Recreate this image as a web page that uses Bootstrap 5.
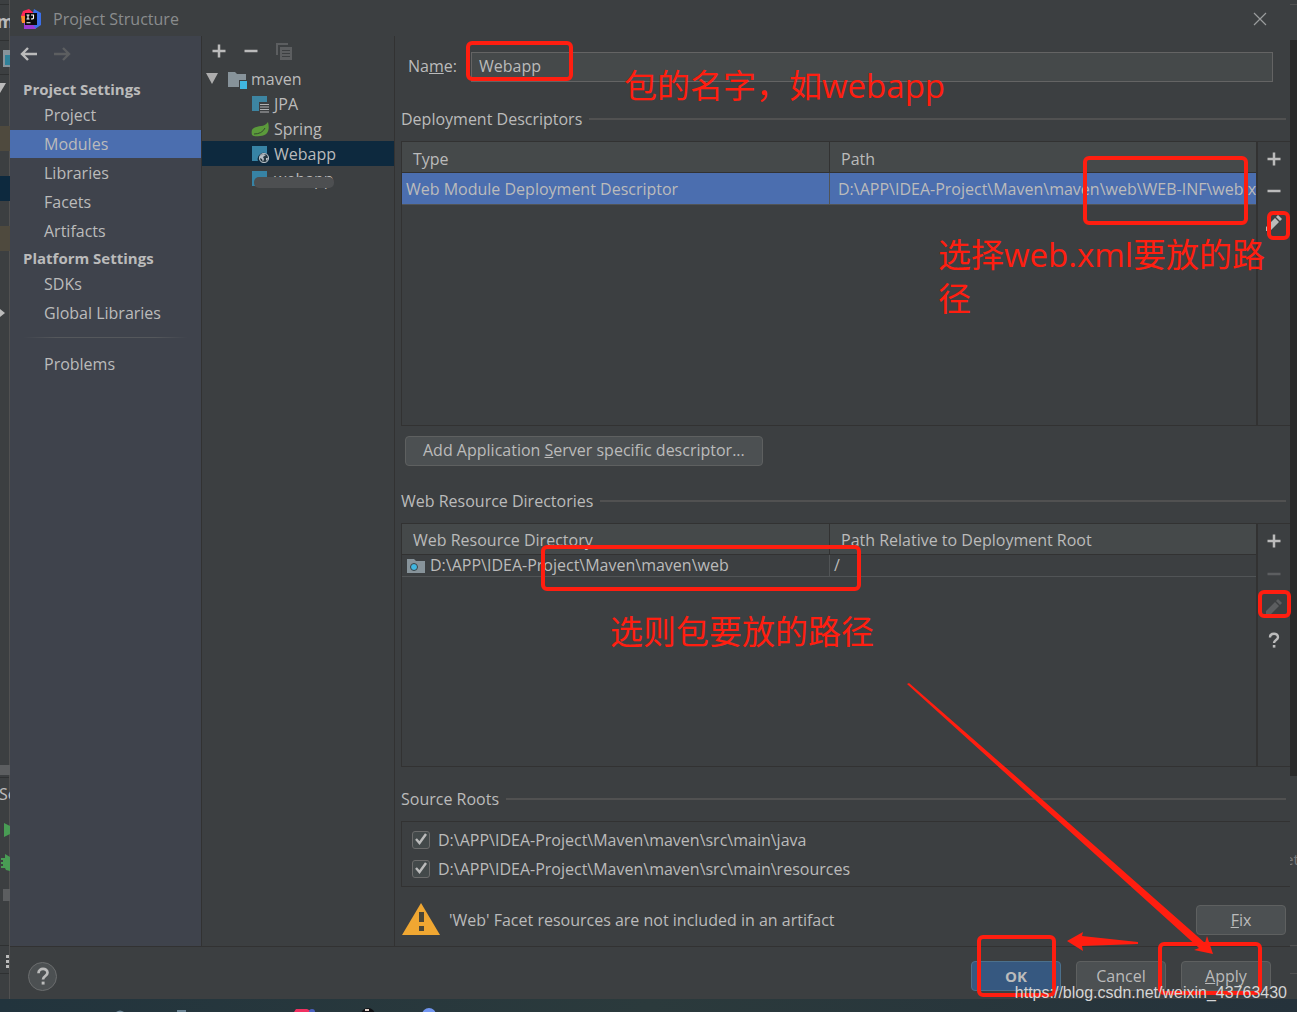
<!DOCTYPE html>
<html lang="en">
<head>
<meta charset="utf-8">
<meta name="viewport" content="width=device-width, initial-scale=1">
<title>Project Structure</title>
<link href="https://cdn.jsdelivr.net/npm/bootstrap@5.3.0/dist/css/bootstrap.min.css" rel="stylesheet">
<style>
  body { font-family: "Open Sans", "Noto Sans", "Noto Sans CJK SC", sans-serif; font-size: 16px; line-height: 24px; color: #bbbbbb; background: #3c3f41; }
  button { font: inherit; color: inherit; }
  .desk { min-height: 100vh; overflow: hidden; }
  .strip { flex: none; width: 10px; overflow: hidden; }
  .strip-end { width: 7px; }
  .dialog-box { min-width: 0; background: #3c3f41; }
  .title-bar { height: 36px; padding: 2px 22px 0 11px; color: #8a8c8d; }
  .plain-btn { display: inline-flex; align-items: center; justify-content: center; padding: 0; border: 0; background: none; }
  .side { flex: none; width: 192px; background: #3f434c; border-right: 1px solid #323232; }
  .side-arrows { height: 41px; padding: 10px 0 0 10px; gap: 17px; align-items: flex-start; }
  .side-title { font-weight: 700; font-size: 15px; line-height: 24px; padding-left: 13px; margin: 0; }
  .side-link { display: block; height: 28px; line-height: 28px; margin-bottom: 1px; padding-left: 34px; color: #bbbbbb; text-decoration: none; }
  .side-link.active { background: #4b6eaf; }
  .side-line { height: 1px; margin: 10px 13px 12px; background: linear-gradient(90deg, transparent, #55585c 20%, #55585c 80%, transparent); }
  .tree { flex: none; width: 193px; border-right: 1px solid #323232; }
  .tree-tools { height: 30px; padding-left: 9px; gap: 16px; }
  .tree-row { height: 25px; padding-left: 49px; gap: 5px; }
  .tree-root { padding-left: 2px; gap: 3px; }
  .tree-root svg:first-child { margin-right: 5px; }
  .tree-row.active { background: #0d293e; }
  .smudge { position: absolute; left: 52px; top: 11px; width: 80px; height: 11px; border-radius: 5px; background: #4d4f51; }
  .pane { min-width: 0; padding: 16px 0 9px 6px; }
  .name-row { padding: 0 17px 0 7px; gap: 14px; }
  .name-row label { padding-bottom: 2px; }
  .name-box { height: 30px; min-width: 0; padding: 0 7px 2px; border: 1px solid #646464; background: #45494a; color: #bbbbbb; }
  .group-head { gap: 7px; margin: 0 4px 10px 0; font-size: 16px; line-height: 24px; font-weight: 400; }
  .group-head::after { content: ""; flex: 1; height: 2px; background: #515151; }
  .head-first { margin-top: 25px; }
  .head-second { margin-top: 23px; }
  .head-third { margin-top: 20px; }
  .grid-wrap { min-height: 150px; border: 1px solid #323232; border-right: 0; }
  .grid-upper { flex: 285 1 0; }
  .grid-lower { flex: 244 1 0; }
  .grid-area { min-width: 0; border-right: 2px solid #323232; }
  .data-grid { width: 100%; table-layout: fixed; border-collapse: separate; border-spacing: 0; }
  .data-grid th { height: 31px; padding: 3px 11px 0; font-weight: 400; background: #45494a; border-bottom: 1px solid #323232; }
  .data-grid th + th { border-left: 1px solid #323232; }
  .data-grid td { padding: 0 4px; white-space: nowrap; overflow: hidden; border-bottom: 1px solid #515456; }
  .data-grid td + td { border-left: 1px solid #515456; }
  .data-grid .chosen td { height: 32px; background: #4b6eaf; }
  .data-grid .chosen td + td { padding-left: 8px; }
  .data-grid .low td { height: 22px; line-height: 21px; }
  .side-tools { flex: none; width: 32px; padding-top: 9px; gap: 16px; }
  .grid-lower .side-tools { gap: 17px; }
  .add-line { margin-top: 10px; padding-left: 4px; line-height: 0; }
  .ide-btn { height: 30px; min-width: 90px; padding: 0 17px; border: 1px solid #5e6060; border-radius: 4px; background: #4c5052; line-height: 27px; }
  .ide-main { background: #365880; border-color: #4c708c; font-weight: 700; font-size: 15px; }
  .roots { padding: 3px 0 3px 10px; border: 1px solid #323232; border-right: 0; }
  .root-row { height: 29px; gap: 8px; }
  .root-row input { appearance: none; width: 18px; height: 18px; margin: 0; border: 1px solid #6b6b6b; border-radius: 3px; background: #43494a; }
  .root-row .tick { position: absolute; left: 2px; top: 7px; pointer-events: none; }
  .warn-row { height: 34px; margin-top: 16px; padding-right: 4px; }
  .foot { flex: none; height: 53px; padding: 6px 19px 0 18px; border-top: 1px solid #323232; gap: 15px; }
  .help-btn { width: 29px; height: 29px; border: 1px solid #6b6d6e; border-radius: 50%; background: #4c5052; }
  .task-bar { flex: none; height: 13px; background: linear-gradient(90deg, #22343d, #2b3a3c 50%, #25323b); }
  .notes { position: absolute; inset: 0; pointer-events: none; overflow: hidden; }
  .frame { position: absolute; border: 4px solid #ff1e10; border-radius: 6px; }
  .note-text { position: absolute; margin: 0; color: #ff1e10; font-size: 33px; line-height: 44px; }
  .site-mark { position: absolute; right: 10px; bottom: 7px; font-family: "Liberation Sans", sans-serif; font-size: 16px; color: #d4d5d6; }
</style>
<script src="https://cdn.jsdelivr.net/npm/bootstrap@5.3.0/dist/js/bootstrap.bundle.min.js"></script>
</head>
<body>
<svg width="0" height="0" class="position-absolute" aria-hidden="true">
  <defs>
    <symbol id="plus" viewBox="0 0 16 16"><path d="M8 1.500v13M1.500 8h13" stroke="currentColor" stroke-width="2.500" fill="none"/></symbol>
    <symbol id="minus" viewBox="0 0 16 16"><path d="M1.500 8h13" stroke="currentColor" stroke-width="2.500"/></symbol>
    <symbol id="pencil" viewBox="0 0 16 16"><path d="M0 16v-4L9 3l4 4-9 9zM10 2l2-2 4 4-2 2z" fill="currentColor"/></symbol>
    <symbol id="query" viewBox="0 0 16 16"><path d="M4 5.500C4 0.500 12 0.500 12 5.200C12 8 8 8 8 11" stroke="currentColor" stroke-width="2.400" fill="none"/><path d="M6.800 13h2.600v2.600H6.800z" fill="currentColor"/></symbol>
    <symbol id="tick" viewBox="0 0 14 14"><path d="M2 7l3.500 4L12 2" stroke="#bbbbbb" stroke-width="2.400" fill="none"/></symbol>
    <symbol id="globe" viewBox="0 0 18 18"><path d="M1 1h15v8a6 6 0 0 0-9 7H1z" fill="#3783a5"/><circle cx="13" cy="13" r="4.500" fill="#253640" stroke="#b4bdc3" stroke-width="1.200"/><path d="M9 11l3-2 3 1-3 2 1 2-1 3-1-3-2-1zM15 13l2 0-1 3-1-1z" fill="#b4bdc3"/></symbol>
  </defs>
</svg>
<div class="desk d-flex flex-column position-relative">
  <div class="d-flex flex-grow-1">
    <div class="strip">
      <svg class="d-block" width="10" height="999" font-family="Noto Sans, sans-serif">
        <path d="M0 4.500h10M0 40.500h10M0 74.500h10M0 777.500h10M0 945.500h10M0 973.500h10" stroke="#2f3132"/>
        <path d="M9.500 0v999" stroke="#515151"/>
        <text x="-3" y="28" font-size="17" font-weight="700" fill="#bbbbbb">m</text>
        <path d="M3 50h7v17H3z" fill="#87939a"/><path d="M5 55h5v10H5z" fill="#2f8199"/>
        <path d="M0 83h6l-6 10z" fill="#bbbbbb"/>
        <path d="M0 126h10v25H0zM0 226h10v25H0z" fill="#4f4a3e"/>
        <path d="M0 176h10v25H0z" fill="#0d293e"/>
        <path d="M0 309l5 4-5 4z" fill="#bbbbbb"/>
        <path d="M0 765h10v10H0z" fill="#5c5e60"/>
        <text x="-1" y="800" font-size="16" fill="#bbbbbb">Se</text>
        <path d="M4 823l6 3v8l-6 3z" fill="#499c54"/>
        <path d="M5 854l5 3v14l-4-1-1-2H1v-2h2v-2H1v-2h2v-2H1v-2h4z" fill="#499c54"/>
        <path d="M3 889h7v12H3z" fill="#5c5e60"/>
        <path d="M6 955h3v3H6zM6 960h3v3H6zM6 965h3v3H6z" fill="#bbbbbb"/>
      </svg>
    </div>

    <div class="dialog-box d-flex flex-column flex-grow-1">
      <header class="title-bar d-flex align-items-center">
        <svg width="20" height="20" viewBox="0 0 20 20" aria-hidden="true">
          <path d="M2 2l6-2 6 5-9 9-5-2 2-2-2-3z" fill="#fe2857"/><path d="M0 7h5v7H1z" fill="#fc8a2a"/>
          <path d="M13 0l7 4v12l-6 4-5-4z" fill="#3b6fe8"/><path d="M3 14h8l4 6H3z" fill="#9b3bd2"/>
          <path d="M4 4h12v12H4z" fill="#0a0a0a"/>
          <path d="M5.500 6h3M7 6v4M5.500 10h3M10 6h2.500v3q0 1-2.500 1M5.500 13.800h4" stroke="#fff" stroke-width="1.100" fill="none"/>
        </svg>
        <span class="ms-2 ps-1">Project Structure</span>
        <button class="plain-btn ms-auto" type="button" aria-label="Close">
          <svg width="16" height="14" viewBox="0 0 16 14"><path d="M2 1l12 12M14 1L2 13" stroke="#9a9c9d" stroke-width="1.200"/></svg>
        </button>
      </header>

      <div class="d-flex flex-grow-1">
        <nav class="side">
          <div class="side-arrows d-flex">
            <button class="plain-btn" type="button" aria-label="Back"><svg width="17" height="16" viewBox="0 0 17 16"><path d="M17 8H2M8 2L2 8l6 6" stroke="#bbbbbb" stroke-width="2.400" fill="none"/></svg></button>
            <button class="plain-btn" type="button" aria-label="Forward"><svg width="17" height="16" viewBox="0 0 17 16"><path d="M0 8h15M9 2l6 6-6 6" stroke="#5c5e60" stroke-width="2.400" fill="none"/></svg></button>
          </div>
          <h2 class="side-title">Project Settings</h2>
          <a class="side-link" href="#">Project</a>
          <a class="side-link active" href="#">Modules</a>
          <a class="side-link" href="#">Libraries</a>
          <a class="side-link" href="#">Facets</a>
          <a class="side-link" href="#">Artifacts</a>
          <h2 class="side-title">Platform Settings</h2>
          <a class="side-link" href="#">SDKs</a>
          <a class="side-link" href="#">Global Libraries</a>
          <div class="side-line"></div>
          <a class="side-link" href="#">Problems</a>
        </nav>

        <section class="tree">
          <div class="tree-tools d-flex align-items-center">
            <button class="plain-btn" type="button" aria-label="Add"><svg width="16" height="16"><use href="#plus"/></svg></button>
            <button class="plain-btn" type="button" aria-label="Remove"><svg width="16" height="16"><use href="#minus"/></svg></button>
            <button class="plain-btn" type="button" aria-label="Copy"><svg width="18" height="18" viewBox="0 0 18 18"><path d="M1 13V1h12v2H3v10z" fill="#5c5e60"/><path d="M5 5h12v13H5z" fill="#5c5e60"/><path d="M7 8.500h8M7 11.500h8M7 14.500h8" stroke="#3c3f41"/></svg></button>
          </div>
          <div class="tree-row tree-root d-flex align-items-center">
            <svg width="16" height="16" viewBox="0 0 16 16"><path d="M2 2h12L8 13z" fill="#adadad"/></svg>
            <svg width="20" height="20" viewBox="0 0 20 20"><path d="M0 3h7l2 2h9v6h-7v7H0z" fill="#87939a"/><path d="M12 12h7v8h-7z" fill="#40b6e0"/></svg>
            <span>maven</span>
          </div>
          <div class="tree-row d-flex align-items-center">
            <svg width="18" height="18" viewBox="0 0 18 18"><path d="M1 1h15v6H8v9H1z" fill="#3d85a2"/><path d="M9 9.500h9M9 12h9M9 14.500h9M9 17h9" stroke="#afb1b3" stroke-width="1.200"/></svg>
            <span>JPA</span>
          </div>
          <div class="tree-row d-flex align-items-center">
            <svg width="18" height="18" viewBox="0 0 18 18"><path d="M17 2c2 8 0 14-8 14q-6 1-8-1c-2-8 4-8 9-9q4 0 7-4z" fill="#5b9a3b"/><path d="M3 14q8 0 11-6" stroke="#36492f" fill="none"/></svg>
            <span>Spring</span>
          </div>
          <div class="tree-row active d-flex align-items-center">
            <svg width="18" height="18"><use href="#globe"/></svg>
            <span>Webapp</span>
          </div>
          <div class="tree-row d-flex align-items-center position-relative">
            <svg width="18" height="18"><use href="#globe"/></svg>
            <span>webapp</span>
            <i class="smudge"></i>
          </div>
        </section>

        <main class="pane d-flex flex-column flex-grow-1">
          <div class="name-row d-flex align-items-center">
            <label for="module-name">Na<u>m</u>e:</label>
            <input class="name-box flex-grow-1" id="module-name" type="text" value="Webapp">
          </div>

          <h3 class="group-head head-first d-flex align-items-center">Deployment Descriptors</h3>
          <div class="grid-wrap grid-upper d-flex">
            <div class="grid-area flex-grow-1">
              <table class="data-grid">
                <thead><tr><th>Type</th><th>Path</th></tr></thead>
                <tbody><tr class="chosen"><td>Web Module Deployment Descriptor</td><td>D:\APP\IDEA-Project\Maven\maven\web\WEB-INF\web.xml</td></tr></tbody>
              </table>
            </div>
            <div class="side-tools d-flex flex-column align-items-center">
              <button class="plain-btn" type="button" aria-label="Add descriptor"><svg width="16" height="16"><use href="#plus"/></svg></button>
              <button class="plain-btn" type="button" aria-label="Remove descriptor"><svg width="16" height="16"><use href="#minus"/></svg></button>
              <button class="plain-btn" type="button" aria-label="Edit descriptor"><svg width="16" height="16"><use href="#pencil"/></svg></button>
            </div>
          </div>
          <div class="add-line"><button class="ide-btn" type="button">Add Application <u>S</u>erver specific descriptor...</button></div>

          <h3 class="group-head head-second d-flex align-items-center">Web Resource Directories</h3>
          <div class="grid-wrap grid-lower d-flex">
            <div class="grid-area flex-grow-1">
              <table class="data-grid">
                <thead><tr><th>Web Resource Directory</th><th>Path Relative to Deployment Root</th></tr></thead>
                <tbody><tr class="low"><td><svg class="me-1" width="20" height="18" viewBox="0 0 20 18"><path d="M1 1h7l2 2h9v12H1z" fill="#87939a"/><circle cx="8" cy="9" r="3.500" fill="#40b6e0" stroke="#3c3f41"/></svg>D:\APP\IDEA-Project\Maven\maven\web</td><td>/</td></tr></tbody>
              </table>
            </div>
            <div class="side-tools d-flex flex-column align-items-center">
              <button class="plain-btn" type="button" aria-label="Add directory"><svg width="16" height="16"><use href="#plus"/></svg></button>
              <button class="plain-btn" type="button" aria-label="Remove directory"><svg width="16" height="16" color="#5c5e60"><use href="#minus"/></svg></button>
              <button class="plain-btn" type="button" aria-label="Edit directory"><svg width="16" height="16" color="#5c5e60"><use href="#pencil"/></svg></button>
              <button class="plain-btn" type="button" aria-label="Directory help"><svg width="16" height="16"><use href="#query"/></svg></button>
            </div>
          </div>

          <h3 class="group-head head-third d-flex align-items-center">Source Roots</h3>
          <div class="roots">
            <div class="root-row d-flex align-items-center position-relative">
              <input type="checkbox" id="root-java" checked><svg class="tick" width="14" height="14"><use href="#tick"/></svg>
              <label for="root-java">D:\APP\IDEA-Project\Maven\maven\src\main\java</label>
            </div>
            <div class="root-row d-flex align-items-center position-relative">
              <input type="checkbox" id="root-res" checked><svg class="tick" width="14" height="14"><use href="#tick"/></svg>
              <label for="root-res">D:\APP\IDEA-Project\Maven\maven\src\main\resources</label>
            </div>
          </div>
          <div class="warn-row d-flex align-items-center">
            <svg width="40" height="34" viewBox="0 0 40 34"><path d="M20 0l19 32H1z" fill="#f0a732"/><path d="M18 9h5v10h-5zM18 23h5v5h-5z" fill="#4b4636"/></svg>
            <span class="ms-2">'Web' Facet resources are not included in an artifact</span>
            <button class="ide-btn ms-auto" type="button"><u>F</u>ix</button>
          </div>
        </main>
      </div>

      <footer class="foot d-flex align-items-center">
        <button class="plain-btn help-btn me-auto" type="button" aria-label="Help"><svg width="18" height="18"><use href="#query"/></svg></button>
        <button class="ide-btn ide-main" type="button">OK</button>
        <button class="ide-btn" type="button">Cancel</button>
        <button class="ide-btn" type="button"><u>A</u>pply</button>
      </footer>
    </div>

    <div class="strip strip-end">
      <svg class="d-block" width="7" height="999" font-family="Noto Sans, sans-serif">
        <path d="M0 40h7v736H0z" fill="#2b2b2b"/>
        <path d="M0 4.500h7M0 945.500h7M0 973.500h7" stroke="#515151"/>
        <text x="-5" y="865" font-size="15" fill="#777777">et</text>
      </svg>
    </div>
  </div>
  <div class="task-bar">
    <svg class="d-block" width="450" height="13"><path d="M116 13q4-3 8 0zM177 11h9v2h-9z" fill="#6b8494"/><path d="M296 10h11l6 3h-19z" fill="#f03060"/><circle cx="312" cy="13" r="3" fill="#4a60c0"/><circle cx="368" cy="16" r="7" fill="#101014"/><path d="M365 10h4v2h-4z" fill="#e0d0c8"/><circle cx="429" cy="16" r="7" fill="#7296f0"/></svg>
  </div>

  <div class="notes">
    <div class="frame" style="left:466px;top:41px;width:107px;height:40px"></div>
    <div class="frame" style="left:1083px;top:156px;width:165px;height:69px"></div>
    <div class="frame" style="left:1267px;top:211px;width:23px;height:29px"></div>
    <div class="frame" style="left:541px;top:545px;width:320px;height:46px"></div>
    <div class="frame" style="left:1258px;top:590px;width:33px;height:28px"></div>
    <div class="frame" style="left:977px;top:935px;width:79px;height:62px"></div>
    <div class="frame" style="left:1158px;top:942px;width:104px;height:53px"></div>
    <p class="note-text" style="left:624px;top:64px">包的名字，如webapp</p>
    <p class="note-text" style="left:938px;top:233px">选择web.xml要放的路<br>径</p>
    <p class="note-text" style="left:610px;top:610px">选则包要放的路径</p>
    <svg class="position-absolute top-0 start-0" width="1297" height="1012" fill="#ff1e10">
      <path d="M907 684l2-1 111 97 185 163 2-7 6 18-19-4 5-2-186-168z"/>
      <path d="M1067 941l16-9-1 4 56 6v2l-56 2 1 5z"/>
    </svg>
    <span class="site-mark">https://blog.csdn.net/weixin_43763430</span>
  </div>
</div>
</body>
</html>
